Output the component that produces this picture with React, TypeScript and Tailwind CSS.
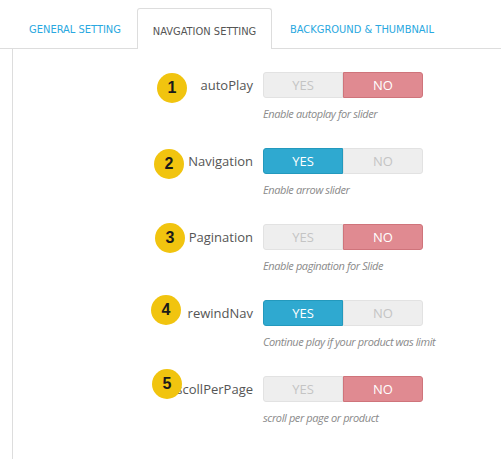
const rows = [
  { n: 1, label: "autoPlay", on: false, help: "Enable autoplay for slider", bx: "left-[144px]", by: "top-[1px]" },
  { n: 2, label: "Navigation", on: true, help: "Enable arrow slider", bx: "left-[141px]", by: "top-[1px]" },
  { n: 3, label: "Pagination", on: false, help: "Enable pagination for Slide", bx: "left-[142px]", by: "top-[-1px]" },
  { n: 4, label: "rewindNav", on: true, help: "Continue play if your product was limit", bx: "left-[138px]", by: "top-[-5px]" },
  { n: 5, label: "scollPerPage", on: false, help: "scroll per page or product", bx: "left-[139px]", by: "top-[-7px]" },
];

function Toggle({ on }: { on: boolean }) {
  return (
    <div className="flex h-[26px] w-[160px] text-[13px] leading-none">
      <div
        className={
          on
            ? "flex w-[80px] items-center justify-center rounded-l-[3px] border border-[#2399bd] bg-[#2fa9d0] text-white"
            : "flex w-[80px] items-center justify-center rounded-l-[3px] border border-[#e2e2e2] bg-[#eeeeee] text-[#c4c4c4]"
        }
      >
        YES
      </div>
      <div
        className={
          on
            ? "flex w-[80px] items-center justify-center rounded-r-[3px] border border-[#e2e2e2] bg-[#eeeeee] text-[#c4c4c4]"
            : "flex w-[80px] items-center justify-center rounded-r-[3px] border border-[#cf747b] bg-[#e08a91] text-white"
        }
      >
        NO
      </div>
    </div>
  );
}

export default function App() {
  return (
    <div className="h-[459px] w-[501px] overflow-hidden bg-white font-['Open_Sans',sans-serif]">
      <div className="flex h-[49px] items-end border-b border-[#dddddd] pl-[13px] font-['DejaVu_Sans_Condensed',sans-serif] text-[11px] font-medium uppercase">
        <div className="flex h-[41px] w-[124px] items-center justify-center pt-[6px] text-[#29a8e0]">General Setting</div>
        <div className="relative top-[1px] flex h-[41px] w-[135px] items-center justify-center rounded-t-[3px] border border-b-0 border-[#dddddd] bg-white pt-[6px] text-[#555555]">
          Navgation Setting
        </div>
        <div className="flex h-[41px] w-[180px] items-center justify-center pt-[6px] text-[#29a8e0]">Background &amp; Thumbnail</div>
      </div>
      <div className="ml-[12px] h-[420px] border-l border-[#dddddd] pt-[23px]">
        <div className="flex flex-col gap-[26px]">
          {rows.map((r) => (
            <div key={r.n} className="relative flex gap-[10px]">
              <div className="w-[240px] pt-[4px] text-right text-[13px] leading-[18px] text-[#555555]">{r.label}</div>
              <div className="flex flex-col gap-[8px]">
                <Toggle on={r.on} />
                <div className="text-[11px] italic leading-[16px] tracking-[-0.4px] text-[#8a8a8a]">{r.help}</div>
              </div>
              <div
                className={`absolute ${r.bx} ${r.by} flex h-[30px] w-[30px] items-center justify-center rounded-full bg-[#f1c40f] font-['Liberation_Sans',sans-serif] text-[16px] font-bold text-[#1a1a1a]`}
              >
                {r.n}
              </div>
            </div>
          ))}
        </div>
      </div>
    </div>
  );
}
